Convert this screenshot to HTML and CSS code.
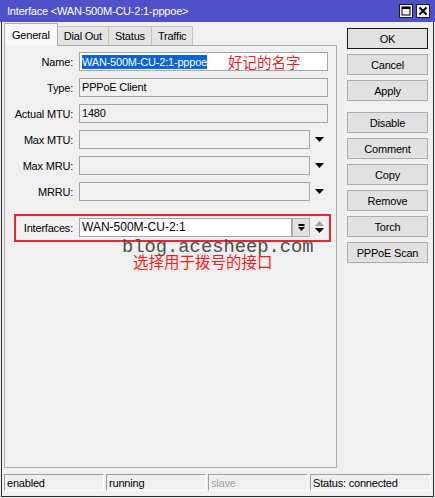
FILE: index.html
```html
<!DOCTYPE html>
<html>
<head>
<meta charset="utf-8">
<link rel="stylesheet" href="styles.css">
</head>
<body>
<div class="titlebar">
  <span class="title">Interface &lt;WAN-500M-CU-2:1-pppoe&gt;</span>
  <div class="tb-btns">
    <span class="tbb"><svg width="10" height="10" viewBox="0 0 10 10"><rect x="1" y="1" width="8" height="8" fill="none" stroke="#000" stroke-width="1"/><rect x="1" y="1" width="8" height="2" fill="#000"/></svg></span>
    <span class="tbb"><svg width="10" height="10" viewBox="0 0 10 10"><path d="M1.5 1.5 L8.5 8.5 M8.5 1.5 L1.5 8.5" stroke="#000" stroke-width="2"/></svg></span>
  </div>
</div>
<div class="frame">
  <div class="main">
    <div class="leftcol">
      <div class="tabs">
        <div class="tab active">General</div>
        <div class="tab">Dial Out</div>
        <div class="tab">Status</div>
        <div class="tab">Traffic</div>
      </div>
      <div class="panel">
        <div class="row">
          <span class="lbl">Name:</span>
          <div class="fld white"><span class="sel">WAN-500M-CU-2:1-pppoe</span><span class="note1">好记的名字</span></div>
        </div>
        <div class="row">
          <span class="lbl">Type:</span>
          <div class="fld">PPPoE Client</div>
        </div>
        <div class="row">
          <span class="lbl">Actual MTU:</span>
          <div class="fld">1480</div>
        </div>
        <div class="row">
          <span class="lbl">Max MTU:</span>
          <div class="fld short"></div>
          <span class="dd"><svg width="9" height="5" viewBox="0 0 9 5"><polygon points="0,0 9,0 4.5,5" fill="#000"/></svg></span>
        </div>
        <div class="row">
          <span class="lbl">Max MRU:</span>
          <div class="fld short"></div>
          <span class="dd"><svg width="9" height="5" viewBox="0 0 9 5"><polygon points="0,0 9,0 4.5,5" fill="#000"/></svg></span>
        </div>
        <div class="row">
          <span class="lbl">MRRU:</span>
          <div class="fld short"></div>
          <span class="dd"><svg width="9" height="5" viewBox="0 0 9 5"><polygon points="0,0 9,0 4.5,5" fill="#000"/></svg></span>
        </div>
        <div class="redbox">
          <div class="row inrow">
            <span class="lbl lbl2">Interfaces:</span>
            <div class="fld white ifld">WAN-500M-CU-2:1</div>
            <span class="ibtn"><svg width="7" height="8" viewBox="0 0 7 8"><rect x="0.5" y="0" width="6" height="2" fill="#000"/><polygon points="0,3 7,3 3.5,7" fill="#000"/></svg></span>
            <span class="updown"><svg width="9" height="13" viewBox="0 0 9 13"><polygon points="0,5 9,5 4.5,0" fill="#a0a0a0"/><polygon points="0,7 9,7 4.5,12" fill="#000"/></svg></span>
          </div>
        </div>
        <div class="note2">选择用于拨号的接口</div>
        <div class="watermark">blog.acesheep.com</div>
      </div>
    </div>
    <div class="buttons">
      <div class="btn default">OK</div>
      <div class="btn">Cancel</div>
      <div class="btn">Apply</div>
      <div class="btn sep">Disable</div>
      <div class="btn">Comment</div>
      <div class="btn">Copy</div>
      <div class="btn">Remove</div>
      <div class="btn">Torch</div>
      <div class="btn">PPPoE Scan</div>
    </div>
  </div>
  <div class="statusbar">
    <div class="cell">enabled</div>
    <div class="cell">running</div>
    <div class="cell dim">slave</div>
    <div class="cell">Status: connected</div>
  </div>
</div>
</body>
</html>
```

FILE: styles.css
```css
* { box-sizing: border-box; }
html, body { margin: 0; padding: 0; }
body {
  width: 435px;
  height: 498px;
  overflow: hidden;
  background: #f0f0f0;
  font-family: "Liberation Sans", Arial, sans-serif;
  font-size: 11px;
  letter-spacing: -0.2px;
  color: #000;
}
.titlebar {
  height: 22px;
  background: #5050c9;
  color: #fff;
  display: flex;
  align-items: center;
  justify-content: space-between;
  padding: 0 5px 0 7px;
}
.title { font-size: 11px; }
.tb-btns { display: flex; gap: 3px; }
.tbb {
  width: 14px;
  height: 14px;
  background: #f0f0f0;
  border: 1px solid #1a1a1a;
  display: flex;
  align-items: center;
  justify-content: center;
}
.frame {
  margin: 0 1px;
  height: 475px;
  border: 1px solid #2b2b2b;
  border-top: none;
  padding: 1px 4px 0 2px;
  display: flex;
  flex-direction: column;
}
.main { display: flex; gap: 10px; }
.leftcol { width: 333px; display: flex; flex-direction: column; }
.tabs { display: flex; height: 22px; align-items: flex-end; }
.tab {
  height: 19px;
  padding: 0 6px;
  border: 1px solid #c4c4c4;
  border-bottom: none;
  background: #e4e4e4;
  display: flex;
  align-items: center;
  font-size: 11px;
}
.tab + .tab { border-left: none; }
.tab.active {
  height: 23px;
  margin-bottom: -1px;
  background: #f7f7f7;
  border-color: #adadad;
  padding: 0 7px 0 7px;
  position: relative;
  z-index: 1;
}
.panel {
  position: relative;
  height: 423px;
  border: 1px solid #adadad;
  background: #f0f0f0;
  padding-top: 6px;
}
.row {
  display: flex;
  align-items: center;
  height: 19px;
  margin-bottom: 7px;
}
.lbl { width: 68px; text-align: right; margin-right: 6px; white-space: nowrap; }
.fld {
  width: 249px;
  height: 19px;
  border: 1px solid #a5a5a5;
  background: #f0f0f0;
  padding-left: 2px;
  line-height: 17px;
  white-space: nowrap;
  overflow: hidden;
  display: flex;
  align-items: center;
}
.fld.white { background: #fff; }
.fld.short { width: 231px; }
.dd { width: 19px; display: flex; justify-content: center; }
.sel {
  background: #0a64d7;
  color: #fff;
  line-height: 14px;
  display: inline-block;
}
.note1 {
  color: #f01e1e;
  font-family: "Noto Sans CJK SC", sans-serif;
  font-size: 14.5px;
  letter-spacing: 0;
  margin-left: 21px;
  line-height: 17px;
}
.redbox {
  width: 317px;
  height: 28px;
  margin: 13px 0 0 9px;
  border: 2px solid #e8262e;
  padding-top: 2px;
}
.inrow { margin-bottom: 0; }
.lbl2 { width: 57px; }
.fld.ifld { width: 213px; font-size: 12px; letter-spacing: 0; }
.ibtn {
  width: 18px;
  height: 19px;
  border: 1px solid #adadad;
  background: #e1e1e1;
  display: flex;
  align-items: center;
  justify-content: center;
}
.updown { width: 18px; display: flex; justify-content: center; }
.note2 {
  margin: 10px 0 0 128px;
  color: #ff1a1a;
  font-family: "Noto Sans CJK SC", sans-serif;
  font-size: 15.5px;
  letter-spacing: 0;
  line-height: 18px;
}
.watermark {
  position: absolute;
  left: 117px;
  top: 192px;
  font-family: "Liberation Mono", monospace;
  font-size: 18.8px;
  line-height: 19px;
  letter-spacing: 0;
  color: #4d4d4d;
}
.buttons {
  width: 81px;
  margin-top: 5px;
  display: flex;
  flex-direction: column;
  gap: 5px;
}
.btn {
  height: 21px;
  border: 1px solid #adadad;
  background: #e1e1e1;
  display: flex;
  align-items: center;
  justify-content: center;
}
.btn.default { border-color: #1a1a1a; }
.btn.sep { margin-top: 6px; }
.statusbar {
  margin-top: 6px;
  margin-right: -2px;
  display: grid;
  grid-template-columns: 100px 100px 100px 1fr;
  gap: 2px;
}
.cell {
  height: 17px;
  border-top: 1px solid #a0a0a0;
  border-left: 1px solid #a0a0a0;
  border-bottom: 1px solid #fff;
  border-right: 1px solid #fff;
  padding: 1px 0 0 2px;
  line-height: 15px;
  white-space: nowrap;
}
.cell.dim { color: #a0a0a0; }
```
